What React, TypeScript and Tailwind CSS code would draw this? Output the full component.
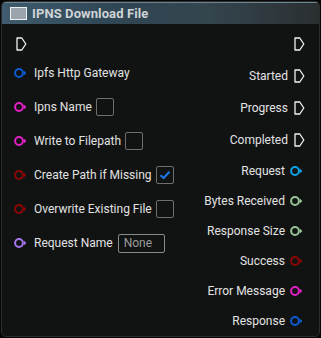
import type { ReactNode } from 'react';

type Pin = { label: string; color: string };

const inputs: (Pin & { extra?: ReactNode })[] = [
    { label: 'Ipfs Http Gateway', color: '#0b5bd0' },
    { label: 'Ipns Name', color: '#e21fc6', extra: <CheckBox /> },
    { label: 'Write to Filepath', color: '#e21fc6', extra: <CheckBox /> },
    { label: 'Create Path if Missing', color: '#8e0505', extra: <CheckBox checked /> },
    { label: 'Overwrite Existing File', color: '#8e0505', extra: <CheckBox /> },
    {
        label: 'Request Name',
        color: '#a776ee',
        extra: (
            <div className="ml-[5px] flex h-[19px] w-[47px] items-center rounded-[2px] border border-[#8a8a8a] px-[5px] text-[12px] text-[#9b9b9b]">
                None
            </div>
        ),
    },
];

const execOutputs = ['Started', 'Progress', 'Completed'];

const dataOutputs: Pin[] = [
    { label: 'Request', color: '#0aa3e8' },
    { label: 'Bytes Received', color: '#96c496' },
    { label: 'Response Size', color: '#96c496' },
    { label: 'Success', color: '#8e0505' },
    { label: 'Error Message', color: '#e21fc6' },
    { label: 'Response', color: '#0b5bd0' },
];

function ExecPin() {
    return (
        <svg width="11" height="14" viewBox="0 0 11 14" className="shrink-0">
            <path d="M1 1 H5.8 L9.8 7 L5.8 13 H1 Z" fill="none" stroke="#f2f2f2" strokeWidth="1.3" strokeLinejoin="round" />
        </svg>
    );
}

function DataPin({ color }: { color: string }) {
    return (
        <svg width="13" height="12" viewBox="0 0 13 12" className="shrink-0">
            <circle cx="5" cy="6" r="3.9" fill="none" stroke={color} strokeWidth="2" />
            <path d="M9.8 3.6 L12.4 6 L9.8 8.4 Z" fill={color} />
        </svg>
    );
}

function CheckBox({ checked = false }: { checked?: boolean }) {
    return (
        <div className="ml-[4px] flex h-[18px] w-[18px] items-center justify-center rounded-[2px] border border-[#6e6e6e]">
            {checked && (
                <svg width="12" height="10" viewBox="0 0 12 10">
                    <path d="M1.5 5.2 L4.6 8 L10.5 1.8" fill="none" stroke="#1a78e6" strokeWidth="2" />
                </svg>
            )}
        </div>
    );
}

export default function App() {
    return (
        <div
            className="h-[338px] w-[321px] bg-[#050605] p-px text-[12px] text-[#e2e2e2]"
            style={{ fontFamily: 'Roboto, "Liberation Sans", sans-serif' }}
        >
            <div className="flex h-[336px] flex-col overflow-hidden rounded-[5px] border border-[#2b2d2c] bg-[#111312]">
                <div className="flex h-[24px] items-center gap-[5px] border-t border-[#6c8393] bg-[linear-gradient(90deg,#3f5b6d_0%,#2f4654_35%,#34454e_65%,#2a2f31_100%)] pl-[8px]">
                    <div className="h-[13px] w-[17px] border-[1.5px] border-[#f0f0f0] bg-[#9aa4ad]" />
                    <span className="text-[13px] font-bold tracking-[0.1px] text-[#cfd3d6]">
                        IPNS Download File
                    </span>
                </div>

                <div className="flex flex-1 justify-between pt-[8px]">
                    <div className="flex flex-col pl-[12px]">
                        <div className="flex h-[24px] items-center pl-[2px]">
                            <ExecPin />
                        </div>
                        {inputs.map((pin) => (
                            <div key={pin.label} className="flex h-[34px] items-center">
                                <DataPin color={pin.color} />
                                <span className="ml-[7px]">{pin.label}</span>
                                {pin.extra}
                            </div>
                        ))}
                    </div>

                    <div className="flex flex-col items-end pr-[14px]">
                        <div className="flex h-[24px] items-center">
                            <ExecPin />
                        </div>
                        <div className="h-[4px]" />
                        {execOutputs.map((label) => (
                            <div key={label} className="flex h-[32px] items-center gap-[6px]">
                                <span>{label}</span>
                                <ExecPin />
                            </div>
                        ))}
                        {dataOutputs.map((pin) => (
                            <div key={pin.label} className="flex h-[30px] items-center gap-[5px] pr-[2px]">
                                <span>{pin.label}</span>
                                <DataPin color={pin.color} />
                            </div>
                        ))}
                    </div>
                </div>
            </div>
        </div>
    );
}
